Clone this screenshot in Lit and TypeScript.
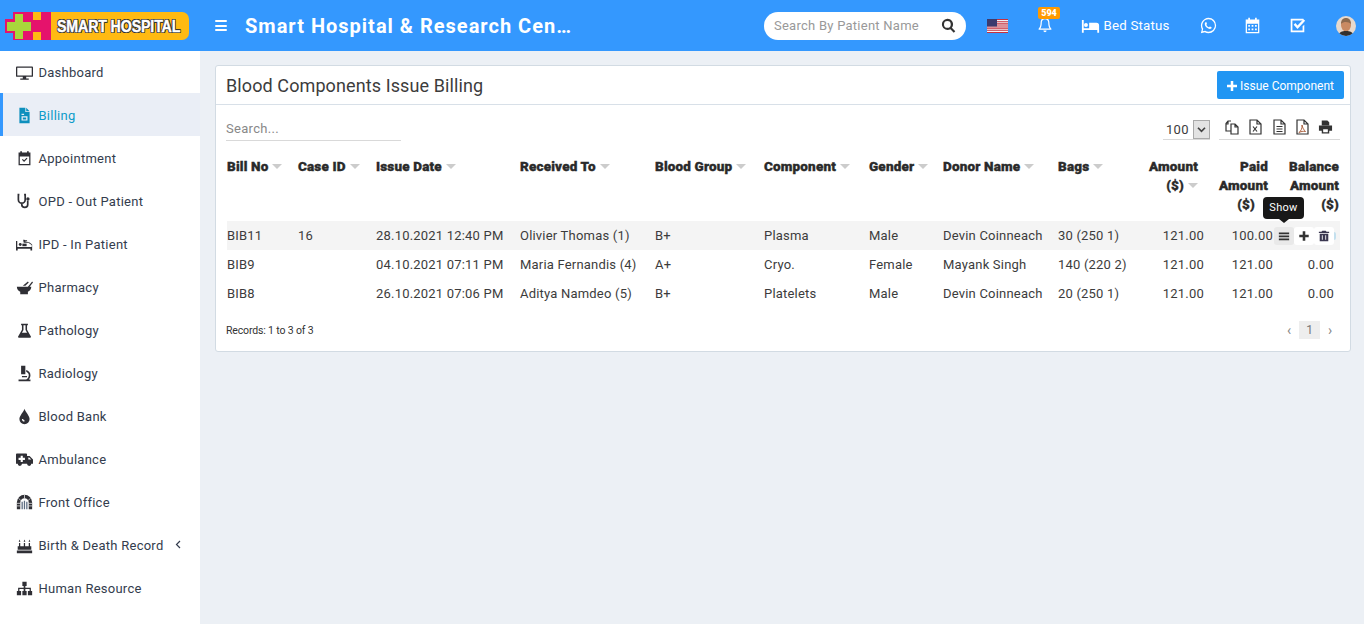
import { LitElement, html, css, svg } from "lit";
import { customElement } from "lit/decorators.js";

const i = (content: unknown, vb = "0 0 20 20") =>
  html`<svg class="ico" viewBox=${vb} aria-hidden="true">${content}</svg>`;

const navIcons: Record<string, unknown> = {
  Dashboard: svg`<path fill-rule="evenodd" d="M1 3h18a1 1 0 0 1 1 1v10a1 1 0 0 1-1 1H12v2h3v1.500H5V17h3v-2H1a1 1 0 0 1-1-1V4a1 1 0 0 1 1-1zm.5 1.500v9h17v-9z"/>`,
  Billing: svg`<path fill-rule="evenodd" d="M4 1h7v5h5v13H4zM12 1l4 4h-4zM6.500 8v1.500h3V8zM6.500 11v5h7v-5zM8 12.300h4v2.400H8z"/>`,
  Appointment: svg`<path fill-rule="evenodd" d="M3 3h2V1.500h2V3h6V1.500h2V3h2v15H3zm1.500 4.500V16.500h11V7.500zM7 11.500l1-1 1.500 1.500 3-3 1 1-4 4z"/>`,
  "OPD - Out Patient": svg`<path fill="none" stroke="currentColor" stroke-width="2" d="M4 2H2.800v6a4 4 0 0 0 8 0V2H9.500M6.800 12v1.500a3.500 3.500 0 0 0 7 0V9"/><circle cx="14" cy="7" r="2"/>`,
  "IPD - In Patient": svg`<path d="M0 6h1.500v7h17v-2.500l-4-2.500H9V6l-1 1 1-3 2 1h2v1h-3l6 1.500 3 2.500V17h-2v-2H2v2H0z"/><circle cx="5" cy="10" r="1.700"/><path d="M7.500 9h5v3h-5z"/>`,
  Pharmacy: svg`<path d="M1 9h13l5-6 1 1-4 5h2c0 3-2 5-4 6v3H5v-3c-2-1-4-3-4-6z"/><path d="M8 8l6-5 1 1-4 4z"/>`,
  Pathology: svg`<path fill-rule="evenodd" d="M6 2h8v1.800h-1v5.200l4.500 8a1 1 0 0 1-1 1.500h-13a1 1 0 0 1-1-1.500L7 9V3.800H6zM8.800 3.800v5.700L7 12.500h6l-1.800-3V3.800z"/>`,
  Radiology: svg`<path d="M6 1h5v10H6zM3 17h14v2H3zM7 13h6v1.500H7zM12 6c3 1 5 3 5 6 0 2-1 4-2 5h-3c2-1 3-3 3-5 0-2-1-3-3-4z"/>`,
  "Blood Bank": svg`<path fill-rule="evenodd" d="M10 1c1 4 6 8 6 12a6 6 0 0 1-12 0c0-4 5-8 6-12zM7 13a3 3 0 0 0 3 3v-1.500A1.500 1.500 0 0 1 8.500 13z"/>`,
  Ambulance: svg`<path fill-rule="evenodd" d="M1 3h11a1 1 0 0 1 1 1v2h3l4 4v5h-2a2.500 2.500 0 0 1-5 0H7a2.500 2.500 0 0 1-5 0H0V4a1 1 0 0 1 1-1zm13.500 4.500V10h3.500l-2.500-2.500zM5.500 5.500V8H3v2.500h2.500V13H8v-2.500h2.500V8H8V5.500z"/>`,
  "Front Office": svg`<path d="M1 18V10a9 9 0 0 1 18 0v8h-4V10a5 5 0 0 0-10 0v8z"/><path d="M1 11h4M1 14h4M15 11h4M15 14h4M3 5l3 3M17 5l-3 3M10 1v4" stroke="#fff" stroke-width=".8"/><path d="M6.500 9h1.500v9H6.500zM9.200 8h1.500v10H9.200zM12 9h1.500v9H12z" fill="#5c6b80"/>`,
  "Birth & Death Record": svg`<path d="M1 16h18v3H1zM2 11h16v4H2zM3.500 7h1.500v4H3.500zM9.200 7h1.500v4H9.200zM15 7h1.500v4H15zM4.200 3l1 2.500h-2zM10 3l1 2.500H9zM15.800 3l1 2.500h-2z"/>`,
  "Human Resource": svg`<path d="M7.500 2h5v5H11v2.200h6.500V13H19v5h-5v-5h2v-2.300h-5V13h1.500v5h-5v-5H9v-2.300H4V13h2v5H1v-5h1.500V9.200H9V7H7.500z"/>`,
};
const navItems = Object.keys(navIcons);

type Row = { bill: string; cid: string; date: string; to: string; bg: string; comp: string; gender: string; donor: string; bags: string; amt: string; paid: string; bal: string };
const rows: Row[] = [
  { bill: "BIB11", cid: "16", date: "28.10.2021 12:40 PM", to: "Olivier Thomas (1)", bg: "B+", comp: "Plasma", gender: "Male", donor: "Devin Coinneach", bags: "30 (250 1)", amt: "121.00", paid: "100.00", bal: "" },
  { bill: "BIB9", cid: "", date: "04.10.2021 07:11 PM", to: "Maria Fernandis (4)", bg: "A+", comp: "Cryo.", gender: "Female", donor: "Mayank Singh", bags: "140 (220 2)", amt: "121.00", paid: "121.00", bal: "0.00" },
  { bill: "BIB8", cid: "", date: "26.10.2021 07:06 PM", to: "Aditya Namdeo (5)", bg: "B+", comp: "Platelets", gender: "Male", donor: "Devin Coinneach", bags: "20 (250 1)", amt: "121.00", paid: "121.00", bal: "0.00" },
];
const heads = ["Bill No", "Case ID", "Issue Date", "Received To", "Blood Group", "Component", "Gender", "Donor Name", "Bags"];
const widths = [71, 78, 144, 135, 109, 105, 74, 115, 85, 67, 69, 61];

@customElement("app-root")
export class AppRoot extends LitElement {
  static styles = css`
    :host { display: block; min-height: 624px; background: #ecf0f5; font-family: Roboto, "Liberation Sans", sans-serif; color: #333; }
    * { box-sizing: border-box; }
    .ico { display: block; width: 100%; height: 100%; fill: currentColor; }
    header { height: 51px; background: #3498fe; display: flex; align-items: center; color: #fff; }
    .logo { width: 184px; height: 28px; margin-left: 5px; display: flex; flex: none; position: relative; }
    .logo svg { width: 46px; height: 28px; display: block; flex: none; }
    .logo-label { flex: 1; background: #ffba12; border-radius: 0 7px 7px 0; display: flex; align-items: center; padding: 1px 0 0 6px; overflow: hidden; }
    .logo-label span { display: inline-block; transform: scaleX(.86); transform-origin: left center; font: 700 16.5px "Liberation Sans", Arial, sans-serif; letter-spacing: -.15px; color: #fff; -webkit-text-stroke: .4px #fff; text-shadow: 1px 0 0 #333, -1px 0 0 #333, 0 1px 0 #333, 0 -1px 0 #333, 1px 1px 0 #333, -1px -1px 0 #333, 1px -1px 0 #333, -1px 1px 0 #333; white-space: nowrap; }
    .burger { width: 12px; height: 11px; margin-left: 26px; flex: none; display: flex; flex-direction: column; justify-content: space-between; }
    .burger i { display: block; height: 2px; background: #fff; border-radius: 1px; }
    .brand { margin-left: 18px; width: 330px; flex: none; font-size: 20px; font-weight: 700; letter-spacing: 1px; white-space: nowrap; }
    .search { margin-left: 189px; width: 202px; height: 28px; flex: none; border-radius: 14px; background: #fff; display: flex; align-items: center; padding: 0 10px; color: #999; font-size: 13px; letter-spacing: .25px; justify-content: space-between; }
    .search span { color: #333; width: 15px; height: 15px; }
    .flag { margin-left: 21px; width: 21px; height: 14px; flex: none; }
    .flag svg { display: block; width: 100%; height: 100%; }
    .bell { margin-left: 29px; width: 16px; height: 18px; position: relative; flex: none; margin-top: -1px; }
    .badge { position: absolute; left: 1px; top: -9px; width: 22px; height: 12px; border-radius: 2px; background: #ff9a00; font-size: 9px; font-weight: 900; line-height: 12px; text-align: center; color: #fff; }
    .bed { margin-left: 28px; width: 19px; height: 14px; flex: none; }
    .bedtxt { margin-left: 3.500px; font-size: 13.300px; letter-spacing: .2px; white-space: nowrap; width: 96px; flex: none; }
    .hico { width: 17px; height: 17px; flex: none; }
    .hico.c { margin-left: 27px; }
    .hico.t { margin-left: 28px; }
    .hico.w { margin-left: 0; }
    .avatar { margin-left: 30px; width: 20px; height: 20px; border-radius: 50%; overflow: hidden; flex: none; }
    .avatar svg { display: block; width: 100%; height: 100%; }
    .body { display: flex; align-items: stretch; min-height: 573px; }
    aside { width: 200px; flex: none; background: #fff; }
    .nav { height: 43px; padding: 2px 0 0 15.500px; display: flex; align-items: center; font-size: 13px; letter-spacing: .26px; color: #333c4d; white-space: nowrap; position: relative; }
    .nav:first-child { height: 42px; padding-top: 1px; }
    .nav.active { background: #eaeef6; color: #0d9bc9; box-shadow: inset 3px 0 0 #3498fe; }
    .nav .ni { width: 17px; height: 17px; flex: none; margin-right: 6px; color: #2f2f35; }
    .nav.active .ni { color: #0d8fbd; }
    .nav .chev { position: absolute; left: 175px; top: 17px; width: 6px; height: 9px; }
    main { flex: 1; padding: 14px 13px 0 15px; }
    .card { background: #fff; border: 1px solid #d2dbe3; border-radius: 3px; height: 287px; padding: 0; }
    .card-head { height: 39px; border-bottom: 1px solid #d8e0e8; display: flex; align-items: center; justify-content: space-between; padding: 0 6px 0 10px; }
    h1 { margin: 0; font-size: 18px; font-weight: 400; color: #3c3c3c; letter-spacing: .1px; }
    .btn { width: 127px; height: 28px; background: #2196f3; border-radius: 2px; color: #fff; font-size: 12px; display: flex; align-items: center; justify-content: center; gap: 3px; padding-top: 1px; }
    .btn span { width: 10px; height: 10px; }
    .tools { display: flex; align-items: flex-end; height: 36px; padding: 0 10px 0 10px; }
    .find { width: 175px; height: 25px; border-bottom: 1px solid #d9d9d9; font-size: 13px; color: #888; letter-spacing: .3px; line-height: 26px; }
    .len { margin-left: auto; margin-bottom: 1px; width: 47px; height: 24px; padding: 4px 0 0 3px; border-bottom: 1px solid #d9d9d9; display: flex; align-items: center; justify-content: space-between; font-size: 13px; letter-spacing: .3px; color: #3c3c3c; }
    .sel { width: 17px; height: 19px; border: 1px solid #aaa; background: #e3e3e3; color: #444; padding: 5px 3px; }
    .exports { margin-left: 9px; margin-bottom: 1px; width: 121px; height: 25px; border-bottom: 1px solid #d9d9d9; display: flex; gap: 8.250px; padding: 4px 4px 0 6px; color: #333; }
    .exports span { width: 15px; height: 16px; }
    .wrap { padding: 13px 10px 0 11px; position: relative; }
    table { width: 1113px; table-layout: fixed; border-collapse: collapse; font-size: 13px; letter-spacing: .2px; color: #3c3c3c; }
    th { height: 67px; vertical-align: top; text-align: left; padding: 3px 0 0 0; font-weight: 900; line-height: 19px; letter-spacing: .17px; color: #2a2a2a; font-size: 13.500px; -webkit-text-stroke: .35px #2a2a2a; }
    th.r { text-align: right; }
    td { height: 29px; padding: 0; white-space: nowrap; }
    td.r { text-align: right; padding-right: 6px; }
    tr.hi td { background: #f4f4f4; }
    .caret { display: inline-block; width: 0; height: 0; border: 5px solid transparent; border-top: 5px solid #ccc; border-bottom: 0; margin-left: 4px; vertical-align: 2px; -webkit-text-stroke: 0; }
    .actions { position: absolute; left: 1058px; top: 86px; display: flex; }
    .act { width: 20px; height: 18px; border-radius: 3px; background: #fff; color: #333; padding: 3px 4px; }
    .act.on { background: #e9e9e9; }
    .act.del { color: #3a3750; }
    .edge { width: 2px; height: 8px; margin-top: 5px; background: #c4e0ee; border-radius: 0 2px 2px 0; }
    .tip { position: absolute; left: 1047px; top: 56px; width: 41px; height: 22px; background: #181818; border-radius: 4px; color: #fff; font-size: 11px; text-align: center; line-height: 22px; letter-spacing: .3px; }
    .tip::after { content: ""; position: absolute; left: 16px; top: 22px; border: 5px solid transparent; border-top: 4px solid #181818; border-bottom: 0; }
    .foot { display: flex; align-items: center; justify-content: space-between; padding: 8px 16px 0 10px; font-size: 10.500px; letter-spacing: -.15px; color: #333; height: 36px; }
    .pages { display: flex; align-items: center; font-size: 14px; color: #888; }
    .pages b { font-weight: 400; width: 21px; height: 18px; line-height: 18px; font-size: 12px; text-align: center; background: #eee; color: #777; margin: 0 6px; }
    .pages span { width: 8px; text-align: center; }
  `;

  render() {
    return html`
      <header>
        <div class="logo">
          <svg viewBox="0 0 46 28">
            <rect x="8" width="38" height="28" fill="#e5136c"/>
            <rect y="7" width="10" height="14" fill="#e5136c"/>
            <rect x="28" width="8" height="8" fill="#ffba12"/>
            <rect x="28" y="20" width="8" height="8" fill="#ffba12"/>
            <path d="M10 2h8v8h8v9h-8v8h-8v-8H2v-9h8z" fill="#a8d73c"/>
          </svg>
          <div class="logo-label"><span>SMART HOSPITAL</span></div>
        </div>
        <div class="burger"><i></i><i></i><i></i></div>
        <div class="brand">Smart Hospital &amp; Research Cen…</div>
        <div class="search">Search By Patient Name
          <span>${i(svg`<path fill-rule="evenodd" d="M8.500 1a7.500 7.500 0 0 1 6 12l4.500 4.500-2 2-4.500-4.500A7.500 7.500 0 1 1 8.500 1zm0 3a4.500 4.500 0 1 0 0 9 4.500 4.500 0 0 0 0-9z"/>`)}</span>
        </div>
        <div class="flag">
          <svg viewBox="0 0 21 14">
            <rect width="21" height="14" fill="#f1f1f5"/>
            <path d="M0 0h21v1.100H0zM0 2.150h21v1.100H0zM0 4.300h21v1.100H0zM0 6.450h21v1.100H0zM0 8.600h21v1.100H0zM0 10.750h21v1.100H0zM0 12.900h21V14H0z" fill="#c8313e"/>
            <rect width="10" height="7.500" fill="#3c3b6e"/>
          </svg>
        </div>
        <div class="bell">
          ${i(svg`<path fill-rule="evenodd" d="M10 0a1.300 1.300 0 0 1 1.300 1.400c2.800.6 4.200 2.800 4.200 5.600 0 4 1.200 6.500 2.500 7.800v1.200H2v-1.200C3.300 13.500 4.500 11 4.500 7c0-2.800 1.400-5 4.200-5.600A1.300 1.300 0 0 1 10 0zM6 7c0 3.400-.7 6-1.800 7.500h11.600C14.700 13 14 10.400 14 7c0-2.600-1.500-4.200-4-4.200S6 4.400 6 7zM8 17h4a2 2 0 0 1-4 0z"/>`)}
          <span class="badge">594</span>
        </div>
        <div class="bed">${i(svg`<path d="M1 1h2v9h6V4h8a3 3 0 0 1 3 3v8h-2v-3H3v3H1z"/><circle cx="5.500" cy="6.500" r="2.200"/>`, "0 0 21 15")}</div>
        <div class="bedtxt">Bed Status</div>
        <div class="hico w">${i(svg`<path fill-rule="evenodd" d="M10 1a9 9 0 0 1 0 18c-1.600 0-3-.4-4.300-1.100L1 19l1.200-4.600A9 9 0 0 1 10 1zm0 1.700a7.300 7.300 0 0 0-6.200 11.200l-.7 2.900 3-.7A7.300 7.300 0 1 0 10 2.700zM7.200 6c.5 0 .7 1.400 1 2 .1.400-.8 1-.6 1.300.6 1.200 1.800 2.300 3 2.800.4.100 1-.9 1.300-.8l1.900 1c.1.900-.9 1.900-2.200 1.800-3-.3-6-3.200-6-5.800C5.600 7 6.400 6 7.200 6z"/>`)}</div>
        <div class="hico c">${i(svg`<path fill-rule="evenodd" d="M2 3h3V1h2v2h6V1h2v2h3v16H2zm1.500 5v9.500h13V8zM5 9.500h2v2H5zM9 9.500h2v2H9zM13 9.500h2v2h-2zM5 13.500h2v2H5zM9 13.500h2v2H9zM13 13.500h2v2h-2z"/>`)}</div>
        <div class="hico t">${i(svg`<path d="M3 2h14v2H4v12h12v-5l2-2v9H2V2z"/><path d="M5.500 9l2-2 2.500 3 7-7.500 2 2-9 9.500z"/>`)}</div>
        <div class="avatar">
          <svg viewBox="0 0 20 20">
            <rect width="20" height="20" fill="#e7d9cd"/>
            <ellipse cx="10" cy="9" rx="5" ry="6.500" fill="#c98a62"/>
            <path d="M5 8c0-4 2-6 5-6s5 2 5 6c-2-2-7-3-10 0z" fill="#8c6a4e"/>
            <path d="M2 20c1-4 4-5 8-5s7 1 8 5z" fill="#33302e"/>
          </svg>
        </div>
      </header>
      <div class="body">
        <aside>
          ${navItems.map(
            (n) => html`<div class="nav ${n === "Billing" ? "active" : ""}">
              <span class="ni">${i(navIcons[n])}</span>${n}
              ${n.startsWith("Birth")
                ? html`<span class="chev">${i(svg`<path d="M5 1L1.500 4.500 5 8" fill="none" stroke="currentColor" stroke-width="1.200"/>`, "0 0 6 9")}</span>`
                : ""}
            </div>`
          )}
        </aside>
        <main>
          <section class="card">
            <div class="card-head">
              <h1>Blood Components Issue Billing</h1>
              <div class="btn"><span>${i(svg`<path d="M4.500 0h3v4.500H12v3H7.500V12h-3V7.500H0v-3h4.500z"/>`, "0 0 12 12")}</span>Issue Component</div>
            </div>
            <div class="tools">
              <div class="find">Search...</div>
              <div class="len">100<span class="sel">${i(svg`<path d="M1 2l4 4 4-4" fill="none" stroke="currentColor" stroke-width="2"/>`, "0 0 10 8")}</span></div>
              <div class="exports">
                <span>${i(svg`<path d="M6 2H3L1 4.500V12h5M3 2v3H1M6 5h4l3 3v7H6zM10 5v3h3" fill="none" stroke="currentColor" stroke-width="1.200"/>`, "0 0 15 16")}</span>
                <span>${i(svg`<path d="M2 1h7l4 4v10H2zM9 1v4h4" fill="none" stroke="currentColor" stroke-width="1.200"/><path d="M5 7.500l4 5M9 7.500l-4 5" stroke="currentColor" stroke-width="1.200"/>`, "0 0 15 16")}</span>
                <span>${i(svg`<path d="M2 1h7l4 4v10H2zM9 1v4h4" fill="none" stroke="currentColor" stroke-width="1.200"/><path d="M4.500 7.500h6M4.500 10h6M4.500 12.500h6" stroke="currentColor"/>`, "0 0 15 16")}</span>
                <span>${i(svg`<path d="M2 1h7l4 4v10H2zM9 1v4h4" fill="none" stroke="currentColor" stroke-width="1.200"/><path d="M7 6c.5 3-1 6-3 7.500 2-1 4-1.500 6.500-1C9 11 7.500 9 7 6z" fill="none" stroke="#a5532f" stroke-width=".9"/>`, "0 0 15 16")}</span>
                <span>${i(svg`<path d="M4 1h6l2 2v3H4zM1 6.500h14V12h-3v3H4v-3H1zM5.500 10.500v3h5v-3z" fill-rule="evenodd"/>`, "0 0 16 16")}</span>
              </div>
            </div>
            <div class="wrap">
              <table>
                <colgroup>${widths.map((w) => html`<col style="width:${w}px" />`)}</colgroup>
                <thead>
                  <tr>
                    ${heads.map((h) => html`<th>${h}<span class="caret"></span></th>`)}
                    <th class="r" style="padding-right:12px">Amount<br />($)<span class="caret"></span></th>
                    <th class="r" style="padding-right:11px">Paid<br />Amount<br />($)<span style="display:inline-block;width:13px"></span></th>
                    <th class="r" style="padding-right:1px">Balance<br />Amount<br />($)</th>
                  </tr>
                </thead>
                <tbody>
                  ${rows.map(
                    (r, idx) => html`<tr class=${idx === 0 ? "hi" : ""}>
                      <td>${r.bill}</td><td>${r.cid}</td><td>${r.date}</td><td>${r.to}</td><td>${r.bg}</td>
                      <td>${r.comp}</td><td>${r.gender}</td><td>${r.donor}</td><td>${r.bags}</td>
                      <td class="r">${r.amt}</td><td class="r">${r.paid}</td><td class="r">${r.bal}</td>
                    </tr>`
                  )}
                </tbody>
              </table>
              <div class="actions">
                <span class="act on">${i(svg`<path d="M1 3h12v2H1zM1 6.500h12v2H1zM1 10h12v2H1z"/>`, "0 0 14 14")}</span>
                <span class="act">${i(svg`<path d="M5.500 1.500h3v4h4v3h-4v4h-3v-4h-4v-3h4z"/>`, "0 0 14 14")}</span>
                <span class="act del">${i(svg`<path fill-rule="evenodd" d="M5 1h4l1 1h3v1.500H1V2h3zM2 4.500h10V13H2zM4.500 6v5.500h1V6zM8.500 6v5.500h1V6z"/>`, "0 0 14 14")}</span>
                <span class="edge"></span>
              </div>
              <div class="tip">Show</div>
            </div>
            <div class="foot">
              <span>Records: 1 to 3 of 3</span>
              <span class="pages"><span>‹</span><b>1</b><span>›</span></span>
            </div>
          </section>
        </main>
      </div>
    `;
  }
}
